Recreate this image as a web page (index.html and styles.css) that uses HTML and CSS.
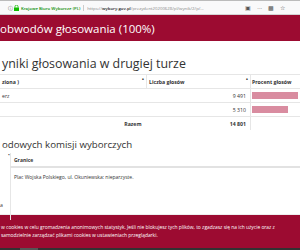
FILE: index.html
```html
<!DOCTYPE html>
<html lang="pl">
<head>
    <meta charset="UTF-8">
    <title>Wyniki głosowania</title>
    <link rel="stylesheet" href="styles.css">
</head>
<body>
<!-- browser bar -->
<div class="toolbar">
    <span class="info">&#9432;</span>
    <svg class="lock" width="5" height="6" viewBox="0 0 5 6"><rect x="0" y="2.5" width="5" height="3.5" fill="#12bc00"/><path d="M1 2.6V1.6a1.5 1.5 0 0 1 3 0v1" fill="none" stroke="#12bc00" stroke-width="0.8"/></svg>
    <span class="site">Krajowe Biuro Wyborcze (PL)</span>
    <span class="url">https://<b>wybory.gov.pl</b>/prezydent20200628/pl/wynik/2/p/...</span>
    <span class="tools">
        <span class="ico">&#9635;</span>
        <span class="ico">&middot;&middot;&middot;</span>
        <span class="ico">&#9641;</span>
        <span class="ico">&#9734;</span>
    </span>
</div>

<div class="banner">obwodów głosowania (100%)</div>

<h2 class="title">yniki głosowania w drugiej turze</h2>

<table class="results">
    <tr class="head">
        <th class="c1">ziona )<span class="sort">&bull;</span></th>
        <th class="c2">Liczba głosów<span class="sort">&bull;</span></th>
        <th class="c3">Procent głosów</th>
    </tr>
    <tr>
        <td class="c1">erz</td>
        <td class="c2 num">9 491</td>
        <td class="c3"><div class="bar" style="width: 100%"></div></td>
    </tr>
    <tr>
        <td class="c1"></td>
        <td class="c2 num">5 310</td>
        <td class="c3"><div class="bar" style="width: 78%"></div></td>
    </tr>
    <tr class="sum">
        <td class="c1 right">Razem</td>
        <td class="c2 num">14 801</td>
        <td class="c3"></td>
    </tr>
</table>

<h2 class="title second">odowych komisji wyborczych</h2>

<div class="commission">
    <div class="side"><span class="sort">&bull;</span><span class="letter">a</span></div>
    <table class="borders">
        <tr class="head"><th>Granice</th></tr>
        <tr><td>Plac Wojska Polskiego, ul. Okuniewska: nieparzyste.</td></tr>
    </table>
</div>

<div class="cookies">
    <p>w cookies w celu gromadzenia anonimowych statystyk. Jeśli nie blokujesz tych plików, to zgadzasz się na ich użycie oraz z</p>
    <p>samodzielnie zarządzać plikami cookies w ustawieniach przeglądarki.</p>
</div>
<div class="taskbar"><span class="tab"></span></div>
</body>
</html>
```

FILE: styles.css
```css
/* page */
body {
    margin: 0;
    width: 300px;
    height: 250px;
    overflow: hidden;
    background-color: #fff;
    font-family: "Open Sans", "Liberation Sans", sans-serif;
    color: #333;
}

/* browser bar */
.toolbar {
    display: flex;
    align-items: center;
    height: 13px;
    border-top: 1px solid #bbb;
    border-bottom: 1px solid #d4d4d4;
    background-color: #f9f9fa;
    font-size: 4.3px;
    white-space: nowrap;
    overflow: hidden;
}

.toolbar .info {
    margin-left: 8px;
    color: #666;
    font-size: 5px;
}

.toolbar .lock {
    margin-left: 1px;
}

.toolbar .site {
    margin-left: 2px;
    padding-right: 3px;
    border-right: 1px solid #ccc;
    color: #058b00;
    font-weight: 600;
}

.toolbar .url {
    margin-left: 3px;
    width: 138px;
    overflow: hidden;
    color: #888;
}

.toolbar .url b {
    color: #222;
    font-weight: 600;
}

.toolbar .tools {
    display: flex;
    gap: 6px;
    margin-left: 20px;
    color: #555;
    font-size: 6px;
}

/* red band */
.banner {
    height: 26px;
    line-height: 28px;
    background-color: #9c0b31;
    color: #fff;
    font-size: 11.5px;
}

.title {
    margin: 14px 0 0 2px;
    height: 19px;
    font-size: 12.4px;
    font-weight: 400;
    color: #333;
}

.title.second {
    margin-top: 8px;
    height: 15px;
    font-size: 9.7px;
}

/* results table */
.results {
    width: 300px;
    border-collapse: collapse;
    font-size: 5.2px;
    table-layout: fixed;
}

.results th,
.results td {
    height: 13px;
    padding: 0 2px;
    border-top: 1px solid #e6e6e6;
    text-align: left;
}

.results th {
    position: relative;
    font-weight: 700;
}

.results .c1 { width: 142px; }
.results .c2 { width: 99px; border-right: 1px solid #e6e6e6; }
.results .c3 { padding-left: 1px; }
.results .head .c1 { border-right: 1px solid #e6e6e6; }

.results .num {
    text-align: right;
    padding-right: 4px;
}

.results .right {
    text-align: right;
    padding-right: 5px;
}

.results .sum td {
    font-weight: 700;
}

.sort {
    position: absolute;
    right: 2px;
    top: 1px;
    font-size: 5px;
}

.bar {
    height: 7px;
    background-color: #d98ca0;
}

/* commissions */
.commission {
    display: flex;
    height: 61px;
    border-bottom: 1px solid #eee;
}

.commission .side {
    position: relative;
    width: 10px;
    font-size: 5.2px;
}

.commission .side .sort {
    right: 0;
    top: -1px;
}

.commission .letter {
    position: absolute;
    left: 0;
    bottom: 5px;
}

.borders {
    flex: 1;
    border-collapse: collapse;
    align-self: flex-start;
    font-size: 5px;
}

.borders th,
.borders td {
    padding: 0 3px;
    text-align: left;
    border-left: 1px solid #e6e6e6;
}

.borders th {
    height: 13px;
    font-weight: 700;
    border-bottom: 2px solid #e2e2e2;
}

.borders td {
    height: 46px;
    vertical-align: top;
    padding-top: 6px;
}

/* cookie info */
.cookies {
    height: 33px;
    padding-top: 9px;
    box-sizing: border-box;
    background-color: #9c0b31;
    color: #fff;
    font-size: 4.9px;
    white-space: nowrap;
}

.cookies p {
    margin: 0;
    padding-left: 1px;
    line-height: 7.5px;
}

.taskbar {
    height: 10px;
    background-color: #323232;
}

.taskbar .tab {
    display: block;
    margin-left: 20px;
    width: 18px;
    height: 10px;
    background-color: #555;
}
```
